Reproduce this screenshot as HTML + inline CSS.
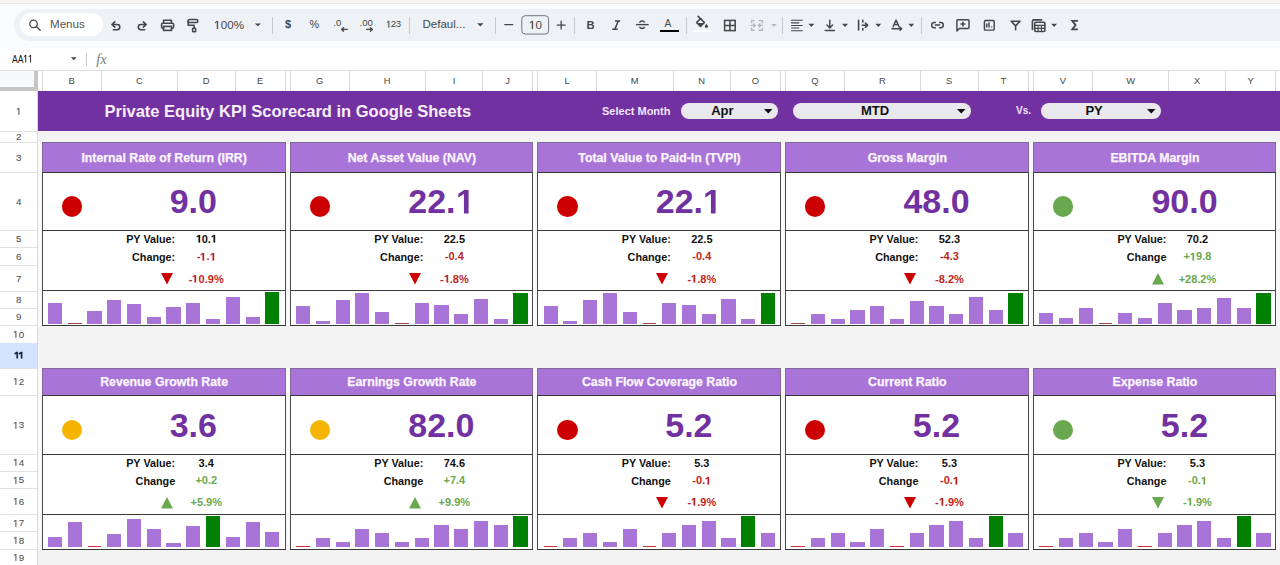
<!DOCTYPE html>
<html><head><meta charset="utf-8"><style>
*{box-sizing:border-box;margin:0;padding:0}
html,body{width:1280px;height:565px;overflow:hidden;background:#f9fbfd;font-family:"Liberation Sans",sans-serif}
body{position:relative}
.a{position:absolute}
.t{position:absolute;white-space:nowrap;line-height:1}
.c{position:absolute;white-space:nowrap;line-height:1;text-align:center}
.r{position:absolute;white-space:nowrap;line-height:1;text-align:right}
svg{position:absolute;overflow:visible}
svg.one{position:static;display:inline-block;vertical-align:baseline}
</style></head><body>
<div class="a" style="left:0px;top:0px;width:1280px;height:3.5px;background:#f6f5f2;"></div><div class="a" style="left:0px;top:3px;width:1280px;height:1px;background:#e9e7e4;"></div><div class="a" style="left:14px;top:9px;width:1300px;height:32px;background:#eef2f7;border-radius:16px;"></div><div class="a" style="left:20px;top:12.5px;width:83px;height:23.5px;background:#ffffff;border-radius:12px;"></div><div class="a" style="left:0px;top:47.5px;width:1280px;height:23px;background:#ffffff;"></div><div class="a" style="left:0px;top:70px;width:1280px;height:21px;background:#ffffff;"></div><div class="a" style="left:0px;top:70px;width:1280px;height:1px;background:#dcdcdc;"></div><svg style="left:0;top:0" width="1280" height="48"><circle cx="33.5" cy="23.9" r="3.7" fill="none" stroke="#444746" stroke-width="1.3" stroke-linecap="round" stroke-linejoin="round"/><path d="M36.3 26.6L40.2 30.2" fill="none" stroke="#444746" stroke-width="1.3" stroke-linecap="round" stroke-linejoin="round"/><path d="M114.8 21.8L111.9 24.5L114.8 27.2M112.3 24.5H117.2A2.6 2.6 0 0 1 117.2 29.7H113.4" fill="none" stroke="#444746" stroke-width="1.6" stroke-linecap="round" stroke-linejoin="round"/><path d="M143.3 21.8L146.2 24.5L143.3 27.2M145.8 24.5H140.9A2.6 2.6 0 0 0 140.9 29.7H144.7" fill="none" stroke="#444746" stroke-width="1.6" stroke-linecap="round" stroke-linejoin="round"/><path d="M163.6 23.2V20.3H171.4V23.2" fill="none" stroke="#444746" stroke-width="1.6" stroke-linecap="round" stroke-linejoin="round"/><rect x="161.6" y="23.2" width="12" height="5.2" rx="1.3" fill="none" stroke="#444746" stroke-width="1.6" stroke-linecap="round" stroke-linejoin="round"/><rect x="163.6" y="26.4" width="7.8" height="4" fill="#eef2f7" stroke="#444746" stroke-width="1.6"/><rect x="188.2" y="19.5" width="9.6" height="3" rx="1.3" fill="none" stroke="#444746" stroke-width="1.6" stroke-linecap="round" stroke-linejoin="round"/><path d="M188.2 21V25.2H194.1V28.2" fill="none" stroke="#444746" stroke-width="1.6" stroke-linecap="round" stroke-linejoin="round"/><rect x="192.6" y="28.2" width="3" height="3.6" rx="0.6" fill="none" stroke="#444746" stroke-width="1.6" stroke-linecap="round" stroke-linejoin="round"/><path d="M254.8 23.5H261L257.9 26.3Z" fill="#444746"/><path d="M477.2 23.3H483.4L480.29999999999995 26.4Z" fill="#444746"/><path d="M771.2 24H776.8L774.0 26.8Z" fill="#b5b8bb"/><path d="M808.4 23.8H814.3L811.3499999999999 26.9Z" fill="#444746"/><path d="M842 23.8H848.1L845.05 26.9Z" fill="#444746"/><path d="M875.5 23.8H881.2L878.35 26.9Z" fill="#444746"/><path d="M908.4 23.8H914.2L911.3 26.9Z" fill="#444746"/><path d="M1051.2 23.8H1057L1054.1 26.9Z" fill="#444746"/></svg><div class="a" style="left:272.2px;top:17px;width:1px;height:16.5px;background:#c7c7c7;"></div><div class="a" style="left:409px;top:17px;width:1px;height:16.5px;background:#c7c7c7;"></div><div class="a" style="left:495px;top:17px;width:1px;height:16.5px;background:#c7c7c7;"></div><div class="a" style="left:574.3px;top:17px;width:1px;height:16.5px;background:#c7c7c7;"></div><div class="a" style="left:686px;top:17px;width:1px;height:16.5px;background:#c7c7c7;"></div><div class="a" style="left:782.1px;top:17px;width:1px;height:16.5px;background:#c7c7c7;"></div><div class="a" style="left:921px;top:17px;width:1px;height:16.5px;background:#c7c7c7;"></div><div class="t" style="left:50px;top:17.97px;font-size:11.6px;color:#555555;font-weight:normal;">Menus</div><div class="t" style="left:214.3px;top:19.17px;font-size:11.6px;color:#444746;font-weight:normal;"><svg class="one" width="6.451" height="7.981" viewBox="0 0 1139 1409"><path transform="matrix(1 0 0 -1 0 1409)" d="M515 0V1237L197 1010V1180L530 1409H696V0Z" fill="currentColor" stroke="currentColor" stroke-width="40"/></svg>00%</div><div class="t" style="left:285px;top:18.86px;font-size:11px;color:#444746;font-weight:bold;">$</div><div class="t" style="left:309.5px;top:18.83px;font-size:10.8px;color:#444746;font-weight:normal;">%</div><div class="t" style="left:333.3px;top:17.93px;font-size:9.6px;color:#444746;font-weight:normal;">.0</div><div class="t" style="left:359.5px;top:17.93px;font-size:9.6px;color:#444746;font-weight:normal;">.00</div><div class="t" style="left:385.5px;top:19.33px;font-size:9.6px;color:#444746;font-weight:normal;letter-spacing:-0.4px;"><svg class="one" width="5.339" height="6.605" viewBox="0 0 1139 1409"><path transform="matrix(1 0 0 -1 0 1409)" d="M515 0V1237L197 1010V1180L530 1409H696V0Z" fill="currentColor" stroke="currentColor" stroke-width="40"/></svg>23</div><div class="t" style="left:422.5px;top:18.65px;font-size:11.5px;color:#444746;font-weight:normal;">Defaul...</div><div class="t" style="left:529px;top:18.77px;font-size:11.6px;color:#444746;font-weight:normal;"><svg class="one" width="6.451" height="7.981" viewBox="0 0 1139 1409"><path transform="matrix(1 0 0 -1 0 1409)" d="M515 0V1237L197 1010V1180L530 1409H696V0Z" fill="currentColor" stroke="currentColor" stroke-width="40"/></svg>0</div><svg style="left:0;top:0" width="1280" height="48"><path d="M341.5 29.4H347.2M343.6 27.6L341.5 29.4L343.6 31.2" fill="none" stroke="#444746" stroke-width="1.3" stroke-linecap="round" stroke-linejoin="round"/><path d="M366.6 29.4H372.4M370.3 27.6L372.4 29.4L370.3 31.2" fill="none" stroke="#444746" stroke-width="1.3" stroke-linecap="round" stroke-linejoin="round"/><path d="M504.8 24.6H512.8M557.2 25.1H565.2M561.2 21.1V29.1" fill="none" stroke="#444746" stroke-width="1.3" stroke-linecap="round" stroke-linejoin="round"/><rect x="521.8" y="15.7" width="26.8" height="18.4" rx="3.5" fill="none" stroke="#747775" stroke-width="1"/></svg><div class="t" style="left:586.5px;top:20.1px;font-size:11.2px;color:#444746;font-weight:bold;">B</div><div class="t" style="left:664.5px;top:18.53px;font-size:10.2px;color:#444746;font-weight:normal;">A</div><div class="a" style="left:660.3px;top:29.7px;width:18.3px;height:2.6px;background:#000000;"></div><div class="a" style="left:693px;top:30.2px;width:18.8px;height:2.2px;background:#ffffff;"></div><svg style="left:0;top:0" width="1280" height="48"><path d="M615 21H620.2M618.3 21L614.8 29.2M612.2 29.2H617.7" fill="none" stroke="#444746" stroke-width="1.6"/><path d="M635.9 24.6H648.7" stroke="#444746" stroke-width="1.4"/><path d="M639.6 22.6A2.6 2.2 0 0 1 644.6 22.4M639.6 26.8A2.6 2.4 0 0 0 644.6 26.8" fill="none" stroke="#444746" stroke-width="1.5"/><path d="M698.1 16.4L701 19.3" fill="none" stroke="#444746" stroke-width="1.6" stroke-linecap="round" stroke-linejoin="round"/><path d="M696.6 22.5L700.5 18.6L704.4 22.5L700.5 26.4Z" fill="none" stroke="#444746" stroke-width="1.6" stroke-linecap="round" stroke-linejoin="round"/><path d="M696.8 22.9H704.2L700.5 26.6Z" fill="#444746"/><path d="M706.4 23.8L707.8 25.8A1.5 1.5 0 1 1 705 25.8Z" fill="#444746"/><rect x="724.6" y="20.4" width="10.6" height="10.2" fill="none" stroke="#444746" stroke-width="1.5"/><path d="M729.9 20.4V30.6M724.6 25.5H735.2" stroke="#444746" stroke-width="1.5"/><path d="M754.6 20.6H751.6V23.3M751.6 27.8V30.3H754.6M758.7 20.6H762.4V23.3M762.4 27.8V30.3H758.7M750.6 25.4H755.2M753.4 23.6L755.2 25.4L753.4 27.2M763 25.4H758.4M760.2 23.6L758.4 25.4L760.2 27.2" fill="none" stroke="#b3b5b8" stroke-width="1.4"/><path d="M791.1 20.3H802.7M791.1 22.9H799.2M791.1 25.5H802.7M791.1 28H799.2M791.1 30.7H802.7" stroke="#444746" stroke-width="1.1"/><path d="M829.8 20.2V27.8M827 25.1L829.8 27.9L832.6 25.1M825.3 30.5H834.4" fill="none" stroke="#444746" stroke-width="1.45" stroke-linecap="round" stroke-linejoin="round"/><path d="M858.6 20.4V30M862.8 20.4V22M862.8 28.5V30M862.3 25.2H867.4M865.4 23.1L867.6 25.2L865.4 27.3" fill="none" stroke="#444746" stroke-width="1.6" stroke-linecap="round" stroke-linejoin="round"/><path d="M893.1 26.8L896.05 20.1L899 26.8M894.1 24.6H898M892 28.8H901.6M900 27.3L901.7 28.8L900 30.3" fill="none" stroke="#444746" stroke-width="1.45" stroke-linecap="round" stroke-linejoin="round"/><path d="M935.4 22.4H934.3A2.65 2.65 0 0 0 934.3 27.7H935.4M939.6 22.4H940.7A2.65 2.65 0 0 1 940.7 27.7H939.6M935.3 25.05H939.7" fill="none" stroke="#444746" stroke-width="1.45" stroke-linecap="round"/><path d="M956.9 31V20.6A1 1 0 0 1 957.9 19.7H968.1A1 1 0 0 1 969 20.6V27.6A1 1 0 0 1 968.1 28.5H959.3Z" fill="none" stroke="#444746" stroke-width="1.45" stroke-linejoin="round"/><path d="M962.9 21.7V26.5M960.5 24.1H965.3" fill="none" stroke="#444746" stroke-width="1.5"/><rect x="984.4" y="20.5" width="9.8" height="9.6" rx="1.2" fill="none" stroke="#444746" stroke-width="1.45"/><path d="M986.7 27.6V23.6M989 27.6V22.5M991.6 27.6V26.6" stroke="#444746" stroke-width="1.5"/><path d="M1011.2 21.2H1020L1015.6 25.9L1011.2 21.2M1015.6 25.6V29.7" fill="none" stroke="#444746" stroke-width="1.6" stroke-linejoin="round" stroke-linecap="round"/><path d="M1032.4 29.5V21.4A1.5 1.5 0 0 1 1033.9 19.9H1041.6" fill="none" stroke="#444746" stroke-width="1.6" stroke-linecap="round" stroke-linejoin="round"/><rect x="1034.7" y="22.3" width="10.2" height="9.2" rx="1.2" fill="none" stroke="#444746" stroke-width="1.6" stroke-linecap="round" stroke-linejoin="round"/><path d="M1034.7 25.4H1044.9M1034.7 28.4H1044.9M1038.1 25.4V31.5M1041.5 25.4V31.5" stroke="#444746" stroke-width="1.1"/><path d="M1077.9 20.9H1072.3L1075.6 25.1L1072.3 29.3H1077.9" fill="none" stroke="#444746" stroke-width="1.8" stroke-linejoin="miter"/></svg><div class="t" style="left:11.6px;top:53.53px;font-size:10.8px;color:#1a1a1a;font-weight:normal;transform:scaleX(0.8);transform-origin:0 0;">AA<svg class="one" width="6.006" height="7.430" viewBox="0 0 1139 1409"><path transform="matrix(1 0 0 -1 0 1409)" d="M515 0V1237L197 1010V1180L530 1409H696V0Z" fill="currentColor" stroke="currentColor" stroke-width="40"/></svg><svg class="one" width="6.006" height="7.430" viewBox="0 0 1139 1409"><path transform="matrix(1 0 0 -1 0 1409)" d="M515 0V1237L197 1010V1180L530 1409H696V0Z" fill="currentColor" stroke="currentColor" stroke-width="40"/></svg></div><svg style="left:0;top:0" width="200" height="70"><path d="M70.9 57.3H76.6L73.75 60.3Z" fill="#444746"/></svg><div class="a" style="left:86.3px;top:52.7px;width:1px;height:13.6px;background:#c7c7c7;"></div><div class="t" style="left:96.3px;top:51.96px;font-size:14.5px;color:#7d7d7d;font-weight:normal;font-family:'Liberation Serif',serif;"><i>fx</i></div><div class="a" style="left:38px;top:91px;width:1242px;height:474px;background:#f3f3f3;"></div><div class="a" style="left:0px;top:91px;width:37.5px;height:474px;background:#ffffff;"></div><div class="a" style="left:0px;top:71px;width:34px;height:16.3px;background:#f8f9fa;"></div><div class="a" style="left:34px;top:71px;width:4px;height:20px;background:#c6c6c6;"></div><div class="a" style="left:0px;top:87.3px;width:38px;height:3.4px;background:#c6c6c6;"></div><div class="a" style="left:37px;top:91px;width:1px;height:474px;background:#d9d9d9;"></div><div class="a" style="left:0px;top:130.5px;width:37px;height:1px;background:#e2e2e2;"></div><div class="c" style="left:0.3px;top:106.31px;width:37px;font-size:9.8px;color:#555555;font-weight:normal;-webkit-text-stroke:0.1px #555555;"><svg class="one" width="5.450" height="6.742" viewBox="0 0 1139 1409"><path transform="matrix(1 0 0 -1 0 1409)" d="M515 0V1237L197 1010V1180L530 1409H696V0Z" fill="currentColor" stroke="currentColor" stroke-width="40"/></svg></div><div class="a" style="left:0px;top:142px;width:37px;height:1px;background:#e2e2e2;"></div><div class="c" style="left:0.3px;top:132.06px;width:37px;font-size:9.8px;color:#555555;font-weight:normal;-webkit-text-stroke:0.1px #555555;">2</div><div class="a" style="left:0px;top:171.7px;width:37px;height:1px;background:#e2e2e2;"></div><div class="c" style="left:0.3px;top:152.66px;width:37px;font-size:9.8px;color:#555555;font-weight:normal;-webkit-text-stroke:0.1px #555555;">3</div><div class="a" style="left:0px;top:229.8px;width:37px;height:1px;background:#e2e2e2;"></div><div class="c" style="left:0.3px;top:196.56px;width:37px;font-size:9.8px;color:#555555;font-weight:normal;-webkit-text-stroke:0.1px #555555;">4</div><div class="a" style="left:0px;top:247.3px;width:37px;height:1px;background:#e2e2e2;"></div><div class="c" style="left:0.3px;top:234.36px;width:37px;font-size:9.8px;color:#555555;font-weight:normal;-webkit-text-stroke:0.1px #555555;">5</div><div class="a" style="left:0px;top:264.9px;width:37px;height:1px;background:#e2e2e2;"></div><div class="c" style="left:0.3px;top:251.91px;width:37px;font-size:9.8px;color:#555555;font-weight:normal;-webkit-text-stroke:0.1px #555555;">6</div><div class="a" style="left:0px;top:290.5px;width:37px;height:1px;background:#e2e2e2;"></div><div class="c" style="left:0.3px;top:273.51px;width:37px;font-size:9.8px;color:#555555;font-weight:normal;-webkit-text-stroke:0.1px #555555;">7</div><div class="a" style="left:0px;top:307.9px;width:37px;height:1px;background:#e2e2e2;"></div><div class="c" style="left:0.3px;top:295.01px;width:37px;font-size:9.8px;color:#555555;font-weight:normal;-webkit-text-stroke:0.1px #555555;">8</div><div class="a" style="left:0px;top:324.9px;width:37px;height:1px;background:#e2e2e2;"></div><div class="c" style="left:0.3px;top:312.21px;width:37px;font-size:9.8px;color:#555555;font-weight:normal;-webkit-text-stroke:0.1px #555555;">9</div><div class="a" style="left:0px;top:342.5px;width:37px;height:1px;background:#e2e2e2;"></div><div class="c" style="left:0.3px;top:329.51px;width:37px;font-size:9.8px;color:#555555;font-weight:normal;-webkit-text-stroke:0.1px #555555;"><svg class="one" width="5.450" height="6.742" viewBox="0 0 1139 1409"><path transform="matrix(1 0 0 -1 0 1409)" d="M515 0V1237L197 1010V1180L530 1409H696V0Z" fill="currentColor" stroke="currentColor" stroke-width="40"/></svg>0</div><div class="a" style="left:0px;top:343px;width:37px;height:25.3px;background:#d3e3fd;"></div><div class="a" style="left:0px;top:367.8px;width:37px;height:1px;background:#e2e2e2;"></div><svg style="left:0;top:0" width="40" height="400"><path d="M14.6 354L16.6 352.6H17.2V358.6M19 354L21 352.6H21.6V358.6" fill="none" stroke="#1a2744" stroke-width="1.7" stroke-linejoin="miter"/></svg><div class="a" style="left:0px;top:395px;width:37px;height:1px;background:#e2e2e2;"></div><div class="c" style="left:0.3px;top:377.21px;width:37px;font-size:9.8px;color:#555555;font-weight:normal;-webkit-text-stroke:0.1px #555555;"><svg class="one" width="5.450" height="6.742" viewBox="0 0 1139 1409"><path transform="matrix(1 0 0 -1 0 1409)" d="M515 0V1237L197 1010V1180L530 1409H696V0Z" fill="currentColor" stroke="currentColor" stroke-width="40"/></svg>2</div><div class="a" style="left:0px;top:453.9px;width:37px;height:1px;background:#e2e2e2;"></div><div class="c" style="left:0.3px;top:420.26px;width:37px;font-size:9.8px;color:#555555;font-weight:normal;-webkit-text-stroke:0.1px #555555;"><svg class="one" width="5.450" height="6.742" viewBox="0 0 1139 1409"><path transform="matrix(1 0 0 -1 0 1409)" d="M515 0V1237L197 1010V1180L530 1409H696V0Z" fill="currentColor" stroke="currentColor" stroke-width="40"/></svg>3</div><div class="a" style="left:0px;top:470.9px;width:37px;height:1px;background:#e2e2e2;"></div><div class="c" style="left:0.3px;top:458.21px;width:37px;font-size:9.8px;color:#555555;font-weight:normal;-webkit-text-stroke:0.1px #555555;"><svg class="one" width="5.450" height="6.742" viewBox="0 0 1139 1409"><path transform="matrix(1 0 0 -1 0 1409)" d="M515 0V1237L197 1010V1180L530 1409H696V0Z" fill="currentColor" stroke="currentColor" stroke-width="40"/></svg>4</div><div class="a" style="left:0px;top:488.2px;width:37px;height:1px;background:#e2e2e2;"></div><div class="c" style="left:0.3px;top:475.36px;width:37px;font-size:9.8px;color:#555555;font-weight:normal;-webkit-text-stroke:0.1px #555555;"><svg class="one" width="5.450" height="6.742" viewBox="0 0 1139 1409"><path transform="matrix(1 0 0 -1 0 1409)" d="M515 0V1237L197 1010V1180L530 1409H696V0Z" fill="currentColor" stroke="currentColor" stroke-width="40"/></svg>5</div><div class="a" style="left:0px;top:514.1px;width:37px;height:1px;background:#e2e2e2;"></div><div class="c" style="left:0.3px;top:496.96px;width:37px;font-size:9.8px;color:#555555;font-weight:normal;-webkit-text-stroke:0.1px #555555;"><svg class="one" width="5.450" height="6.742" viewBox="0 0 1139 1409"><path transform="matrix(1 0 0 -1 0 1409)" d="M515 0V1237L197 1010V1180L530 1409H696V0Z" fill="currentColor" stroke="currentColor" stroke-width="40"/></svg>6</div><div class="a" style="left:0px;top:530.9px;width:37px;height:1px;background:#e2e2e2;"></div><div class="c" style="left:0.3px;top:518.31px;width:37px;font-size:9.8px;color:#555555;font-weight:normal;-webkit-text-stroke:0.1px #555555;"><svg class="one" width="5.450" height="6.742" viewBox="0 0 1139 1409"><path transform="matrix(1 0 0 -1 0 1409)" d="M515 0V1237L197 1010V1180L530 1409H696V0Z" fill="currentColor" stroke="currentColor" stroke-width="40"/></svg>7</div><div class="a" style="left:0px;top:548.6px;width:37px;height:1px;background:#e2e2e2;"></div><div class="c" style="left:0.3px;top:535.56px;width:37px;font-size:9.8px;color:#555555;font-weight:normal;-webkit-text-stroke:0.1px #555555;"><svg class="one" width="5.450" height="6.742" viewBox="0 0 1139 1409"><path transform="matrix(1 0 0 -1 0 1409)" d="M515 0V1237L197 1010V1180L530 1409H696V0Z" fill="currentColor" stroke="currentColor" stroke-width="40"/></svg>8</div><div class="a" style="left:0px;top:565.5px;width:37px;height:1px;background:#e2e2e2;"></div><div class="c" style="left:0.3px;top:552.86px;width:37px;font-size:9.8px;color:#555555;font-weight:normal;-webkit-text-stroke:0.1px #555555;"><svg class="one" width="5.450" height="6.742" viewBox="0 0 1139 1409"><path transform="matrix(1 0 0 -1 0 1409)" d="M515 0V1237L197 1010V1180L530 1409H696V0Z" fill="currentColor" stroke="currentColor" stroke-width="40"/></svg>9</div><div class="a" style="left:41.7px;top:71px;width:1px;height:19.5px;background:#d9d9d9;"></div><div class="c" style="left:42.2px;top:76.09px;width:59px;font-size:9.4px;color:#474747;font-weight:normal;">B</div><div class="a" style="left:100.7px;top:71px;width:1px;height:19.5px;background:#d9d9d9;"></div><div class="c" style="left:101.2px;top:76.09px;width:76.3px;font-size:9.4px;color:#474747;font-weight:normal;">C</div><div class="a" style="left:177px;top:71px;width:1px;height:19.5px;background:#d9d9d9;"></div><div class="c" style="left:177.5px;top:76.09px;width:57.5px;font-size:9.4px;color:#474747;font-weight:normal;">D</div><div class="a" style="left:234.5px;top:71px;width:1px;height:19.5px;background:#d9d9d9;"></div><div class="a" style="left:284.75px;top:71px;width:1px;height:19.5px;background:#d9d9d9;"></div><div class="c" style="left:235px;top:76.09px;width:50.25px;font-size:9.4px;color:#474747;font-weight:normal;">E</div><div class="a" style="left:289.75px;top:71px;width:1px;height:19.5px;background:#d9d9d9;"></div><div class="c" style="left:290.25px;top:76.09px;width:58.75px;font-size:9.4px;color:#474747;font-weight:normal;">G</div><div class="a" style="left:348.5px;top:71px;width:1px;height:19.5px;background:#d9d9d9;"></div><div class="c" style="left:349px;top:76.09px;width:76.5px;font-size:9.4px;color:#474747;font-weight:normal;">H</div><div class="a" style="left:425px;top:71px;width:1px;height:19.5px;background:#d9d9d9;"></div><div class="c" style="left:425.5px;top:76.09px;width:57px;font-size:9.4px;color:#474747;font-weight:normal;">I</div><div class="a" style="left:482px;top:71px;width:1px;height:19.5px;background:#d9d9d9;"></div><div class="a" style="left:532px;top:71px;width:1px;height:19.5px;background:#d9d9d9;"></div><div class="c" style="left:482.5px;top:76.09px;width:50px;font-size:9.4px;color:#474747;font-weight:normal;">J</div><div class="a" style="left:537px;top:71px;width:1px;height:19.5px;background:#d9d9d9;"></div><div class="c" style="left:537.5px;top:76.09px;width:59px;font-size:9.4px;color:#474747;font-weight:normal;">L</div><div class="a" style="left:596px;top:71px;width:1px;height:19.5px;background:#d9d9d9;"></div><div class="c" style="left:596.5px;top:76.09px;width:76.5px;font-size:9.4px;color:#474747;font-weight:normal;">M</div><div class="a" style="left:672.5px;top:71px;width:1px;height:19.5px;background:#d9d9d9;"></div><div class="c" style="left:673px;top:76.09px;width:57.5px;font-size:9.4px;color:#474747;font-weight:normal;">N</div><div class="a" style="left:730px;top:71px;width:1px;height:19.5px;background:#d9d9d9;"></div><div class="a" style="left:780px;top:71px;width:1px;height:19.5px;background:#d9d9d9;"></div><div class="c" style="left:730.5px;top:76.09px;width:50px;font-size:9.4px;color:#474747;font-weight:normal;">O</div><div class="a" style="left:785px;top:71px;width:1px;height:19.5px;background:#d9d9d9;"></div><div class="c" style="left:785.5px;top:76.09px;width:59px;font-size:9.4px;color:#474747;font-weight:normal;">Q</div><div class="a" style="left:844px;top:71px;width:1px;height:19.5px;background:#d9d9d9;"></div><div class="c" style="left:844.5px;top:76.09px;width:76px;font-size:9.4px;color:#474747;font-weight:normal;">R</div><div class="a" style="left:920px;top:71px;width:1px;height:19.5px;background:#d9d9d9;"></div><div class="c" style="left:920.5px;top:76.09px;width:57.5px;font-size:9.4px;color:#474747;font-weight:normal;">S</div><div class="a" style="left:977.5px;top:71px;width:1px;height:19.5px;background:#d9d9d9;"></div><div class="a" style="left:1028.25px;top:71px;width:1px;height:19.5px;background:#d9d9d9;"></div><div class="c" style="left:978px;top:76.09px;width:50.75px;font-size:9.4px;color:#474747;font-weight:normal;">T</div><div class="a" style="left:1033px;top:71px;width:1px;height:19.5px;background:#d9d9d9;"></div><div class="c" style="left:1033.5px;top:76.09px;width:59px;font-size:9.4px;color:#474747;font-weight:normal;">V</div><div class="a" style="left:1092px;top:71px;width:1px;height:19.5px;background:#d9d9d9;"></div><div class="c" style="left:1092.5px;top:76.09px;width:76.25px;font-size:9.4px;color:#474747;font-weight:normal;">W</div><div class="a" style="left:1168.25px;top:71px;width:1px;height:19.5px;background:#d9d9d9;"></div><div class="c" style="left:1168.75px;top:76.09px;width:56.85px;font-size:9.4px;color:#474747;font-weight:normal;">X</div><div class="a" style="left:1225.1px;top:71px;width:1px;height:19.5px;background:#d9d9d9;"></div><div class="c" style="left:1225.6px;top:76.09px;width:50px;font-size:9.4px;color:#474747;font-weight:normal;">Y</div><div class="a" style="left:1275.1px;top:71px;width:1px;height:19.5px;background:#d9d9d9;"></div><div class="a" style="left:38px;top:91px;width:1242px;height:40px;background:#7131a1;"></div><div class="t" style="left:104.5px;top:103.2px;font-size:16.5px;color:#f8eefc;font-weight:bold;">Private Equity KPI Scorecard in Google Sheets</div><div class="t" style="left:602px;top:105.56px;font-size:11px;color:#f3e6fb;font-weight:bold;">Select Month</div><div class="a" style="left:680.6px;top:103px;width:97.7px;height:15.6px;background:#e9e8ec;border-radius:8px;"></div><div class="c" style="left:680.6px;top:104.1px;width:83.7px;font-size:13px;color:#111;font-weight:bold;">Apr</div><svg style="left:764.3px;top:109px" width="9" height="5"><path d="M0 0H8.5L4.25 4.5Z" fill="#111"/></svg><div class="a" style="left:793.1px;top:103px;width:177.8px;height:15.6px;background:#e9e8ec;border-radius:8px;"></div><div class="c" style="left:793.1px;top:104.1px;width:163.8px;font-size:13px;color:#111;font-weight:bold;">MTD</div><svg style="left:956.9px;top:109px" width="9" height="5"><path d="M0 0H8.5L4.25 4.5Z" fill="#111"/></svg><div class="t" style="left:1016px;top:106.4px;font-size:10px;color:#f3e6fb;font-weight:bold;">Vs.</div><div class="a" style="left:1040.9px;top:103px;width:120.4px;height:15.6px;background:#e9e8ec;border-radius:8px;"></div><div class="c" style="left:1040.9px;top:104.1px;width:106.4px;font-size:13px;color:#111;font-weight:bold;">PY</div><svg style="left:1147.3px;top:109px" width="9" height="5"><path d="M0 0H8.5L4.25 4.5Z" fill="#111"/></svg><div class="a" style="left:38px;top:142px;width:1242px;height:183.8px;background:#f9f9f9;"></div><div class="a" style="left:38px;top:368px;width:1242px;height:181.3px;background:#f9f9f9;"></div><div class="a" style="left:41.8px;top:142px;width:244px;height:183.8px;background:#ffffff;"></div><div class="a" style="left:41.8px;top:142px;width:244px;height:30.7px;background:#a974d8;"></div><div class="a" style="left:41.8px;top:142px;width:244px;height:1px;background:#86689a;"></div><div class="a" style="left:41.8px;top:142px;width:1px;height:29.7px;background:#86689a;"></div><div class="a" style="left:284.8px;top:142px;width:1px;height:29.7px;background:#86689a;"></div><div class="a" style="left:41.8px;top:171.7px;width:244px;height:1px;background:#383838;"></div><div class="a" style="left:41.8px;top:229.8px;width:244px;height:1px;background:#383838;"></div><div class="a" style="left:41.8px;top:290px;width:244px;height:1px;background:#383838;"></div><div class="a" style="left:41.8px;top:324.8px;width:244px;height:1px;background:#383838;"></div><div class="a" style="left:41.8px;top:172.2px;width:1px;height:153.1px;background:#4a4a4a;"></div><div class="a" style="left:284.8px;top:172.2px;width:1px;height:153.1px;background:#4a4a4a;"></div><div class="c" style="left:42.6px;top:151.78px;width:243px;font-size:12.3px;color:#fbf6ff;font-weight:bold;-webkit-text-stroke:0.25px #fbf6ff;">Internal Rate of Return (IRR)</div><div class="a" style="left:61.55px;top:196px;width:20.5px;height:20.5px;border-radius:50%;background:#cc0000"></div><div class="c" style="left:101.3px;top:183.96px;width:184px;font-size:34px;color:#7131a1;font-weight:bold;">9.0</div><div class="r" style="left:42.3px;top:234.23px;width:132.9px;font-size:10.8px;color:#111;font-weight:bold;">PY Value:</div><div class="r" style="left:42.3px;top:251.53px;width:132.9px;font-size:10.8px;color:#111;font-weight:bold;">Change:</div><div class="c" style="left:177.6px;top:234.06px;width:57.3px;font-size:11px;color:#111;font-weight:bold;"><svg class="one" width="6.118" height="7.568" viewBox="0 0 1139 1409"><path transform="matrix(1 0 0 -1 0 1409)" d="M478 0V1170L140 959V1180L493 1409H759V0Z" fill="currentColor" stroke="currentColor" stroke-width="40"/></svg>0.<svg class="one" width="6.118" height="7.568" viewBox="0 0 1139 1409"><path transform="matrix(1 0 0 -1 0 1409)" d="M478 0V1170L140 959V1180L493 1409H759V0Z" fill="currentColor" stroke="currentColor" stroke-width="40"/></svg></div><div class="c" style="left:177.6px;top:251.36px;width:57.3px;font-size:11px;color:#c31f22;font-weight:bold;">-<svg class="one" width="6.118" height="7.568" viewBox="0 0 1139 1409"><path transform="matrix(1 0 0 -1 0 1409)" d="M478 0V1170L140 959V1180L493 1409H759V0Z" fill="currentColor" stroke="currentColor" stroke-width="40"/></svg>.<svg class="one" width="6.118" height="7.568" viewBox="0 0 1139 1409"><path transform="matrix(1 0 0 -1 0 1409)" d="M478 0V1170L140 959V1180L493 1409H759V0Z" fill="currentColor" stroke="currentColor" stroke-width="40"/></svg></div><div class="c" style="left:177.6px;top:273.56px;width:57.3px;font-size:11px;color:#c31f22;font-weight:bold;">-<svg class="one" width="6.118" height="7.568" viewBox="0 0 1139 1409"><path transform="matrix(1 0 0 -1 0 1409)" d="M478 0V1170L140 959V1180L493 1409H759V0Z" fill="currentColor" stroke="currentColor" stroke-width="40"/></svg>0.9%</div><svg style="left:160.8px;top:272.9px" width="12" height="11.5"><path d="M0 0H12L6 11.5Z" fill="#cc0000"/></svg><div class="a" style="left:47.9px;top:302.7px;width:14.2px;height:20.9px;background:#a974d8;"></div><div class="a" style="left:67.96px;top:322.9px;width:13.6px;height:1px;background:#9c4545;"></div><div class="a" style="left:87.42px;top:311.49px;width:14.2px;height:12.11px;background:#a974d8;"></div><div class="a" style="left:107.18px;top:299.77px;width:14.2px;height:23.83px;background:#a974d8;"></div><div class="a" style="left:126.94px;top:304.07px;width:14.2px;height:19.53px;background:#a974d8;"></div><div class="a" style="left:146.7px;top:316.76px;width:14.2px;height:6.84px;background:#a974d8;"></div><div class="a" style="left:166.46px;top:307px;width:14.2px;height:16.6px;background:#a974d8;"></div><div class="a" style="left:186.22px;top:303.48px;width:14.2px;height:20.12px;background:#a974d8;"></div><div class="a" style="left:205.98px;top:318.72px;width:14.2px;height:4.88px;background:#a974d8;"></div><div class="a" style="left:225.74px;top:296.84px;width:14.2px;height:26.76px;background:#a974d8;"></div><div class="a" style="left:245.5px;top:317.15px;width:14.2px;height:6.45px;background:#a974d8;"></div><div class="a" style="left:265.26px;top:292.35px;width:14.2px;height:31.25px;background:#008000;"></div><div class="a" style="left:289.9px;top:142px;width:243.4px;height:183.8px;background:#ffffff;"></div><div class="a" style="left:289.9px;top:142px;width:243.4px;height:30.7px;background:#a974d8;"></div><div class="a" style="left:289.9px;top:142px;width:243.4px;height:1px;background:#86689a;"></div><div class="a" style="left:289.9px;top:142px;width:1px;height:29.7px;background:#86689a;"></div><div class="a" style="left:532.3px;top:142px;width:1px;height:29.7px;background:#86689a;"></div><div class="a" style="left:289.9px;top:171.7px;width:243.4px;height:1px;background:#383838;"></div><div class="a" style="left:289.9px;top:229.8px;width:243.4px;height:1px;background:#383838;"></div><div class="a" style="left:289.9px;top:290px;width:243.4px;height:1px;background:#383838;"></div><div class="a" style="left:289.9px;top:324.8px;width:243.4px;height:1px;background:#383838;"></div><div class="a" style="left:289.9px;top:172.2px;width:1px;height:153.1px;background:#4a4a4a;"></div><div class="a" style="left:532.3px;top:172.2px;width:1px;height:153.1px;background:#4a4a4a;"></div><div class="c" style="left:290.7px;top:151.78px;width:242.4px;font-size:12.3px;color:#fbf6ff;font-weight:bold;-webkit-text-stroke:0.25px #fbf6ff;">Net Asset Value (NAV)</div><div class="a" style="left:309.65px;top:196px;width:20.5px;height:20.5px;border-radius:50%;background:#cc0000"></div><div class="c" style="left:349.4px;top:183.96px;width:184px;font-size:34px;color:#7131a1;font-weight:bold;">22.<svg class="one" width="18.909" height="23.392" viewBox="0 0 1139 1409"><path transform="matrix(1 0 0 -1 0 1409)" d="M478 0V1170L140 959V1180L493 1409H759V0Z" fill="currentColor" stroke="currentColor" stroke-width="0"/></svg></div><div class="r" style="left:290.4px;top:234.23px;width:132.9px;font-size:10.8px;color:#111;font-weight:bold;">PY Value:</div><div class="r" style="left:290.4px;top:251.53px;width:132.9px;font-size:10.8px;color:#111;font-weight:bold;">Change:</div><div class="c" style="left:425.7px;top:234.06px;width:57.3px;font-size:11px;color:#111;font-weight:bold;">22.5</div><div class="c" style="left:425.7px;top:251.36px;width:57.3px;font-size:11px;color:#c31f22;font-weight:bold;">-0.4</div><div class="c" style="left:425.7px;top:273.56px;width:57.3px;font-size:11px;color:#c31f22;font-weight:bold;">-<svg class="one" width="6.118" height="7.568" viewBox="0 0 1139 1409"><path transform="matrix(1 0 0 -1 0 1409)" d="M478 0V1170L140 959V1180L493 1409H759V0Z" fill="currentColor" stroke="currentColor" stroke-width="40"/></svg>.8%</div><svg style="left:408.9px;top:272.9px" width="12" height="11.5"><path d="M0 0H12L6 11.5Z" fill="#cc0000"/></svg><div class="a" style="left:296px;top:306.41px;width:14.2px;height:17.19px;background:#a974d8;"></div><div class="a" style="left:315.76px;top:320.87px;width:14.2px;height:2.73px;background:#a974d8;"></div><div class="a" style="left:335.52px;top:299.77px;width:14.2px;height:23.83px;background:#a974d8;"></div><div class="a" style="left:355.28px;top:293.33px;width:14.2px;height:30.27px;background:#a974d8;"></div><div class="a" style="left:375.04px;top:311.88px;width:14.2px;height:11.72px;background:#a974d8;"></div><div class="a" style="left:395.1px;top:322.9px;width:13.6px;height:1px;background:#9c4545;"></div><div class="a" style="left:414.56px;top:302.7px;width:14.2px;height:20.9px;background:#a974d8;"></div><div class="a" style="left:434.32px;top:304.85px;width:14.2px;height:18.75px;background:#a974d8;"></div><div class="a" style="left:454.08px;top:313.64px;width:14.2px;height:9.96px;background:#a974d8;"></div><div class="a" style="left:473.84px;top:298.6px;width:14.2px;height:25px;background:#a974d8;"></div><div class="a" style="left:493.6px;top:319.3px;width:14.2px;height:4.3px;background:#a974d8;"></div><div class="a" style="left:513.36px;top:292.74px;width:14.2px;height:30.86px;background:#008000;"></div><div class="a" style="left:537.4px;top:142px;width:243.6px;height:183.8px;background:#ffffff;"></div><div class="a" style="left:537.4px;top:142px;width:243.6px;height:30.7px;background:#a974d8;"></div><div class="a" style="left:537.4px;top:142px;width:243.6px;height:1px;background:#86689a;"></div><div class="a" style="left:537.4px;top:142px;width:1px;height:29.7px;background:#86689a;"></div><div class="a" style="left:780px;top:142px;width:1px;height:29.7px;background:#86689a;"></div><div class="a" style="left:537.4px;top:171.7px;width:243.6px;height:1px;background:#383838;"></div><div class="a" style="left:537.4px;top:229.8px;width:243.6px;height:1px;background:#383838;"></div><div class="a" style="left:537.4px;top:290px;width:243.6px;height:1px;background:#383838;"></div><div class="a" style="left:537.4px;top:324.8px;width:243.6px;height:1px;background:#383838;"></div><div class="a" style="left:537.4px;top:172.2px;width:1px;height:153.1px;background:#4a4a4a;"></div><div class="a" style="left:780px;top:172.2px;width:1px;height:153.1px;background:#4a4a4a;"></div><div class="c" style="left:538.2px;top:151.78px;width:242.6px;font-size:12.3px;color:#fbf6ff;font-weight:bold;-webkit-text-stroke:0.25px #fbf6ff;">Total Value to Paid-In (TVPI)</div><div class="a" style="left:557.15px;top:196px;width:20.5px;height:20.5px;border-radius:50%;background:#cc0000"></div><div class="c" style="left:596.9px;top:183.96px;width:184px;font-size:34px;color:#7131a1;font-weight:bold;">22.<svg class="one" width="18.909" height="23.392" viewBox="0 0 1139 1409"><path transform="matrix(1 0 0 -1 0 1409)" d="M478 0V1170L140 959V1180L493 1409H759V0Z" fill="currentColor" stroke="currentColor" stroke-width="0"/></svg></div><div class="r" style="left:537.9px;top:234.23px;width:132.9px;font-size:10.8px;color:#111;font-weight:bold;">PY Value:</div><div class="r" style="left:537.9px;top:251.53px;width:132.9px;font-size:10.8px;color:#111;font-weight:bold;">Change:</div><div class="c" style="left:673.2px;top:234.06px;width:57.3px;font-size:11px;color:#111;font-weight:bold;">22.5</div><div class="c" style="left:673.2px;top:251.36px;width:57.3px;font-size:11px;color:#c31f22;font-weight:bold;">-0.4</div><div class="c" style="left:673.2px;top:273.56px;width:57.3px;font-size:11px;color:#c31f22;font-weight:bold;">-<svg class="one" width="6.118" height="7.568" viewBox="0 0 1139 1409"><path transform="matrix(1 0 0 -1 0 1409)" d="M478 0V1170L140 959V1180L493 1409H759V0Z" fill="currentColor" stroke="currentColor" stroke-width="40"/></svg>.8%</div><svg style="left:656.4px;top:272.9px" width="12" height="11.5"><path d="M0 0H12L6 11.5Z" fill="#cc0000"/></svg><div class="a" style="left:543.5px;top:306.41px;width:14.2px;height:17.19px;background:#a974d8;"></div><div class="a" style="left:563.26px;top:320.87px;width:14.2px;height:2.73px;background:#a974d8;"></div><div class="a" style="left:583.02px;top:299.77px;width:14.2px;height:23.83px;background:#a974d8;"></div><div class="a" style="left:602.78px;top:293.33px;width:14.2px;height:30.27px;background:#a974d8;"></div><div class="a" style="left:622.54px;top:311.88px;width:14.2px;height:11.72px;background:#a974d8;"></div><div class="a" style="left:642.6px;top:322.9px;width:13.6px;height:1px;background:#9c4545;"></div><div class="a" style="left:662.06px;top:302.7px;width:14.2px;height:20.9px;background:#a974d8;"></div><div class="a" style="left:681.82px;top:304.85px;width:14.2px;height:18.75px;background:#a974d8;"></div><div class="a" style="left:701.58px;top:313.64px;width:14.2px;height:9.96px;background:#a974d8;"></div><div class="a" style="left:721.34px;top:298.6px;width:14.2px;height:25px;background:#a974d8;"></div><div class="a" style="left:741.1px;top:319.3px;width:14.2px;height:4.3px;background:#a974d8;"></div><div class="a" style="left:760.86px;top:292.74px;width:14.2px;height:30.86px;background:#008000;"></div><div class="a" style="left:785px;top:142px;width:244px;height:183.8px;background:#ffffff;"></div><div class="a" style="left:785px;top:142px;width:244px;height:30.7px;background:#a974d8;"></div><div class="a" style="left:785px;top:142px;width:244px;height:1px;background:#86689a;"></div><div class="a" style="left:785px;top:142px;width:1px;height:29.7px;background:#86689a;"></div><div class="a" style="left:1028px;top:142px;width:1px;height:29.7px;background:#86689a;"></div><div class="a" style="left:785px;top:171.7px;width:244px;height:1px;background:#383838;"></div><div class="a" style="left:785px;top:229.8px;width:244px;height:1px;background:#383838;"></div><div class="a" style="left:785px;top:290px;width:244px;height:1px;background:#383838;"></div><div class="a" style="left:785px;top:324.8px;width:244px;height:1px;background:#383838;"></div><div class="a" style="left:785px;top:172.2px;width:1px;height:153.1px;background:#4a4a4a;"></div><div class="a" style="left:1028px;top:172.2px;width:1px;height:153.1px;background:#4a4a4a;"></div><div class="c" style="left:785.8px;top:151.78px;width:243px;font-size:12.3px;color:#fbf6ff;font-weight:bold;-webkit-text-stroke:0.25px #fbf6ff;">Gross Margin</div><div class="a" style="left:804.75px;top:196px;width:20.5px;height:20.5px;border-radius:50%;background:#cc0000"></div><div class="c" style="left:844.5px;top:183.96px;width:184px;font-size:34px;color:#7131a1;font-weight:bold;">48.0</div><div class="r" style="left:785.5px;top:234.23px;width:132.9px;font-size:10.8px;color:#111;font-weight:bold;">PY Value:</div><div class="r" style="left:785.5px;top:251.53px;width:132.9px;font-size:10.8px;color:#111;font-weight:bold;">Change:</div><div class="c" style="left:920.8px;top:234.06px;width:57.3px;font-size:11px;color:#111;font-weight:bold;">52.3</div><div class="c" style="left:920.8px;top:251.36px;width:57.3px;font-size:11px;color:#c31f22;font-weight:bold;">-4.3</div><div class="c" style="left:920.8px;top:273.56px;width:57.3px;font-size:11px;color:#c31f22;font-weight:bold;">-8.2%</div><svg style="left:904px;top:272.9px" width="12" height="11.5"><path d="M0 0H12L6 11.5Z" fill="#cc0000"/></svg><div class="a" style="left:791.4px;top:322.9px;width:13.6px;height:1px;background:#9c4545;"></div><div class="a" style="left:810.86px;top:314.23px;width:14.2px;height:9.38px;background:#a974d8;"></div><div class="a" style="left:830.62px;top:318.72px;width:14.2px;height:4.88px;background:#a974d8;"></div><div class="a" style="left:850.38px;top:309.93px;width:14.2px;height:13.67px;background:#a974d8;"></div><div class="a" style="left:870.14px;top:305.63px;width:14.2px;height:17.97px;background:#a974d8;"></div><div class="a" style="left:889.9px;top:318.72px;width:14.2px;height:4.88px;background:#a974d8;"></div><div class="a" style="left:909.66px;top:301.14px;width:14.2px;height:22.46px;background:#a974d8;"></div><div class="a" style="left:929.42px;top:305.63px;width:14.2px;height:17.97px;background:#a974d8;"></div><div class="a" style="left:949.18px;top:314.23px;width:14.2px;height:9.38px;background:#a974d8;"></div><div class="a" style="left:968.94px;top:296.84px;width:14.2px;height:26.76px;background:#a974d8;"></div><div class="a" style="left:988.7px;top:309.93px;width:14.2px;height:13.67px;background:#a974d8;"></div><div class="a" style="left:1008.46px;top:292.74px;width:14.2px;height:30.86px;background:#008000;"></div><div class="a" style="left:1033px;top:142px;width:243.3px;height:183.8px;background:#ffffff;"></div><div class="a" style="left:1033px;top:142px;width:243.3px;height:30.7px;background:#a974d8;"></div><div class="a" style="left:1033px;top:142px;width:243.3px;height:1px;background:#86689a;"></div><div class="a" style="left:1033px;top:142px;width:1px;height:29.7px;background:#86689a;"></div><div class="a" style="left:1275.3px;top:142px;width:1px;height:29.7px;background:#86689a;"></div><div class="a" style="left:1033px;top:171.7px;width:243.3px;height:1px;background:#383838;"></div><div class="a" style="left:1033px;top:229.8px;width:243.3px;height:1px;background:#383838;"></div><div class="a" style="left:1033px;top:290px;width:243.3px;height:1px;background:#383838;"></div><div class="a" style="left:1033px;top:324.8px;width:243.3px;height:1px;background:#383838;"></div><div class="a" style="left:1033px;top:172.2px;width:1px;height:153.1px;background:#4a4a4a;"></div><div class="a" style="left:1275.3px;top:172.2px;width:1px;height:153.1px;background:#4a4a4a;"></div><div class="c" style="left:1033.8px;top:151.78px;width:242.3px;font-size:12.3px;color:#fbf6ff;font-weight:bold;-webkit-text-stroke:0.25px #fbf6ff;">EBITDA Margin</div><div class="a" style="left:1052.75px;top:196px;width:20.5px;height:20.5px;border-radius:50%;background:#6aa84f"></div><div class="c" style="left:1092.5px;top:183.96px;width:184px;font-size:34px;color:#7131a1;font-weight:bold;">90.0</div><div class="r" style="left:1033.5px;top:234.23px;width:132.9px;font-size:10.8px;color:#111;font-weight:bold;">PY Value:</div><div class="r" style="left:1033.5px;top:251.53px;width:132.9px;font-size:10.8px;color:#111;font-weight:bold;">Change</div><div class="c" style="left:1168.8px;top:234.06px;width:57.3px;font-size:11px;color:#111;font-weight:bold;">70.2</div><div class="c" style="left:1168.8px;top:251.36px;width:57.3px;font-size:11px;color:#6aa84f;font-weight:bold;">+<svg class="one" width="6.118" height="7.568" viewBox="0 0 1139 1409"><path transform="matrix(1 0 0 -1 0 1409)" d="M478 0V1170L140 959V1180L493 1409H759V0Z" fill="currentColor" stroke="currentColor" stroke-width="40"/></svg>9.8</div><div class="c" style="left:1168.8px;top:273.56px;width:57.3px;font-size:11px;color:#6aa84f;font-weight:bold;">+28.2%</div><svg style="left:1152px;top:272.9px" width="12" height="11.5"><path d="M0 11.5H12L6 0Z" fill="#6aa84f"/></svg><div class="a" style="left:1039.1px;top:312.86px;width:14.2px;height:10.74px;background:#a974d8;"></div><div class="a" style="left:1058.86px;top:317.74px;width:14.2px;height:5.86px;background:#a974d8;"></div><div class="a" style="left:1078.62px;top:307.98px;width:14.2px;height:15.62px;background:#a974d8;"></div><div class="a" style="left:1098.68px;top:322.9px;width:13.6px;height:1px;background:#9c4545;"></div><div class="a" style="left:1118.14px;top:312.86px;width:14.2px;height:10.74px;background:#a974d8;"></div><div class="a" style="left:1137.9px;top:317.74px;width:14.2px;height:5.86px;background:#a974d8;"></div><div class="a" style="left:1157.66px;top:302.7px;width:14.2px;height:20.9px;background:#a974d8;"></div><div class="a" style="left:1177.42px;top:309.93px;width:14.2px;height:13.67px;background:#a974d8;"></div><div class="a" style="left:1197.18px;top:307.98px;width:14.2px;height:15.62px;background:#a974d8;"></div><div class="a" style="left:1216.94px;top:297.62px;width:14.2px;height:25.98px;background:#a974d8;"></div><div class="a" style="left:1236.7px;top:307.98px;width:14.2px;height:15.62px;background:#a974d8;"></div><div class="a" style="left:1256.46px;top:292.74px;width:14.2px;height:30.86px;background:#008000;"></div><div class="a" style="left:41.8px;top:367.9px;width:244px;height:181.7px;background:#ffffff;"></div><div class="a" style="left:41.8px;top:367.9px;width:244px;height:28.2px;background:#a974d8;"></div><div class="a" style="left:41.8px;top:367.9px;width:244px;height:1px;background:#86689a;"></div><div class="a" style="left:41.8px;top:367.9px;width:1px;height:27.2px;background:#86689a;"></div><div class="a" style="left:284.8px;top:367.9px;width:1px;height:27.2px;background:#86689a;"></div><div class="a" style="left:41.8px;top:395.1px;width:244px;height:1px;background:#383838;"></div><div class="a" style="left:41.8px;top:453.9px;width:244px;height:1px;background:#383838;"></div><div class="a" style="left:41.8px;top:514.1px;width:244px;height:1px;background:#383838;"></div><div class="a" style="left:41.8px;top:548.6px;width:244px;height:1px;background:#383838;"></div><div class="a" style="left:41.8px;top:395.6px;width:1px;height:153.5px;background:#4a4a4a;"></div><div class="a" style="left:284.8px;top:395.6px;width:1px;height:153.5px;background:#4a4a4a;"></div><div class="c" style="left:42.6px;top:375.88px;width:243px;font-size:12.3px;color:#fbf6ff;font-weight:bold;-webkit-text-stroke:0.25px #fbf6ff;">Revenue Growth Rate</div><div class="a" style="left:61.55px;top:419.75px;width:20.5px;height:20.5px;border-radius:50%;background:#f4b400"></div><div class="c" style="left:101.3px;top:407.96px;width:184px;font-size:34px;color:#7131a1;font-weight:bold;">3.6</div><div class="r" style="left:42.3px;top:458.33px;width:132.9px;font-size:10.8px;color:#111;font-weight:bold;">PY Value:</div><div class="r" style="left:42.3px;top:475.63px;width:132.9px;font-size:10.8px;color:#111;font-weight:bold;">Change</div><div class="c" style="left:177.6px;top:458.16px;width:57.3px;font-size:11px;color:#111;font-weight:bold;">3.4</div><div class="c" style="left:177.6px;top:475.46px;width:57.3px;font-size:11px;color:#6aa84f;font-weight:bold;">+0.2</div><div class="c" style="left:177.6px;top:496.56px;width:57.3px;font-size:11px;color:#6aa84f;font-weight:bold;">+5.9%</div><svg style="left:160.8px;top:496.8px" width="12" height="11.5"><path d="M0 11.5H12L6 0Z" fill="#6aa84f"/></svg><div class="a" style="left:47.9px;top:537.19px;width:14.2px;height:9.96px;background:#a974d8;"></div><div class="a" style="left:67.66px;top:521.76px;width:14.2px;height:25.39px;background:#a974d8;"></div><div class="a" style="left:87.72px;top:545.85px;width:13.6px;height:1.4px;background:#d02a35;"></div><div class="a" style="left:107.18px;top:534.45px;width:14.2px;height:12.7px;background:#a974d8;"></div><div class="a" style="left:126.94px;top:518.83px;width:14.2px;height:28.32px;background:#a974d8;"></div><div class="a" style="left:146.7px;top:528.6px;width:14.2px;height:18.55px;background:#a974d8;"></div><div class="a" style="left:166.46px;top:542.85px;width:14.2px;height:4.3px;background:#a974d8;"></div><div class="a" style="left:186.22px;top:525.67px;width:14.2px;height:21.48px;background:#a974d8;"></div><div class="a" style="left:205.98px;top:515.9px;width:14.2px;height:31.25px;background:#008000;"></div><div class="a" style="left:225.74px;top:537.19px;width:14.2px;height:9.96px;background:#a974d8;"></div><div class="a" style="left:245.5px;top:521.76px;width:14.2px;height:25.39px;background:#a974d8;"></div><div class="a" style="left:265.26px;top:531.52px;width:14.2px;height:15.62px;background:#a974d8;"></div><div class="a" style="left:289.9px;top:367.9px;width:243.4px;height:181.7px;background:#ffffff;"></div><div class="a" style="left:289.9px;top:367.9px;width:243.4px;height:28.2px;background:#a974d8;"></div><div class="a" style="left:289.9px;top:367.9px;width:243.4px;height:1px;background:#86689a;"></div><div class="a" style="left:289.9px;top:367.9px;width:1px;height:27.2px;background:#86689a;"></div><div class="a" style="left:532.3px;top:367.9px;width:1px;height:27.2px;background:#86689a;"></div><div class="a" style="left:289.9px;top:395.1px;width:243.4px;height:1px;background:#383838;"></div><div class="a" style="left:289.9px;top:453.9px;width:243.4px;height:1px;background:#383838;"></div><div class="a" style="left:289.9px;top:514.1px;width:243.4px;height:1px;background:#383838;"></div><div class="a" style="left:289.9px;top:548.6px;width:243.4px;height:1px;background:#383838;"></div><div class="a" style="left:289.9px;top:395.6px;width:1px;height:153.5px;background:#4a4a4a;"></div><div class="a" style="left:532.3px;top:395.6px;width:1px;height:153.5px;background:#4a4a4a;"></div><div class="c" style="left:290.7px;top:375.88px;width:242.4px;font-size:12.3px;color:#fbf6ff;font-weight:bold;-webkit-text-stroke:0.25px #fbf6ff;">Earnings Growth Rate</div><div class="a" style="left:309.65px;top:419.75px;width:20.5px;height:20.5px;border-radius:50%;background:#f4b400"></div><div class="c" style="left:349.4px;top:407.96px;width:184px;font-size:34px;color:#7131a1;font-weight:bold;">82.0</div><div class="r" style="left:290.4px;top:458.33px;width:132.9px;font-size:10.8px;color:#111;font-weight:bold;">PY Value:</div><div class="r" style="left:290.4px;top:475.63px;width:132.9px;font-size:10.8px;color:#111;font-weight:bold;">Change</div><div class="c" style="left:425.7px;top:458.16px;width:57.3px;font-size:11px;color:#111;font-weight:bold;">74.6</div><div class="c" style="left:425.7px;top:475.46px;width:57.3px;font-size:11px;color:#6aa84f;font-weight:bold;">+7.4</div><div class="c" style="left:425.7px;top:496.56px;width:57.3px;font-size:11px;color:#6aa84f;font-weight:bold;">+9.9%</div><svg style="left:408.9px;top:496.8px" width="12" height="11.5"><path d="M0 11.5H12L6 0Z" fill="#6aa84f"/></svg><div class="a" style="left:296.3px;top:545.85px;width:13.6px;height:1.4px;background:#d02a35;"></div><div class="a" style="left:315.76px;top:537.77px;width:14.2px;height:9.38px;background:#a974d8;"></div><div class="a" style="left:335.52px;top:542.27px;width:14.2px;height:4.88px;background:#a974d8;"></div><div class="a" style="left:355.28px;top:529.18px;width:14.2px;height:17.97px;background:#a974d8;"></div><div class="a" style="left:375.04px;top:533.48px;width:14.2px;height:13.67px;background:#a974d8;"></div><div class="a" style="left:394.8px;top:542.27px;width:14.2px;height:4.88px;background:#a974d8;"></div><div class="a" style="left:414.56px;top:537.77px;width:14.2px;height:9.38px;background:#a974d8;"></div><div class="a" style="left:434.32px;top:524.69px;width:14.2px;height:22.46px;background:#a974d8;"></div><div class="a" style="left:454.08px;top:529.18px;width:14.2px;height:17.97px;background:#a974d8;"></div><div class="a" style="left:473.84px;top:520.59px;width:14.2px;height:26.56px;background:#a974d8;"></div><div class="a" style="left:493.6px;top:524.69px;width:14.2px;height:22.46px;background:#a974d8;"></div><div class="a" style="left:513.36px;top:515.9px;width:14.2px;height:31.25px;background:#008000;"></div><div class="a" style="left:537.4px;top:367.9px;width:243.6px;height:181.7px;background:#ffffff;"></div><div class="a" style="left:537.4px;top:367.9px;width:243.6px;height:28.2px;background:#a974d8;"></div><div class="a" style="left:537.4px;top:367.9px;width:243.6px;height:1px;background:#86689a;"></div><div class="a" style="left:537.4px;top:367.9px;width:1px;height:27.2px;background:#86689a;"></div><div class="a" style="left:780px;top:367.9px;width:1px;height:27.2px;background:#86689a;"></div><div class="a" style="left:537.4px;top:395.1px;width:243.6px;height:1px;background:#383838;"></div><div class="a" style="left:537.4px;top:453.9px;width:243.6px;height:1px;background:#383838;"></div><div class="a" style="left:537.4px;top:514.1px;width:243.6px;height:1px;background:#383838;"></div><div class="a" style="left:537.4px;top:548.6px;width:243.6px;height:1px;background:#383838;"></div><div class="a" style="left:537.4px;top:395.6px;width:1px;height:153.5px;background:#4a4a4a;"></div><div class="a" style="left:780px;top:395.6px;width:1px;height:153.5px;background:#4a4a4a;"></div><div class="c" style="left:538.2px;top:375.88px;width:242.6px;font-size:12.3px;color:#fbf6ff;font-weight:bold;-webkit-text-stroke:0.25px #fbf6ff;">Cash Flow Coverage Ratio</div><div class="a" style="left:557.15px;top:419.75px;width:20.5px;height:20.5px;border-radius:50%;background:#cc0000"></div><div class="c" style="left:596.9px;top:407.96px;width:184px;font-size:34px;color:#7131a1;font-weight:bold;">5.2</div><div class="r" style="left:537.9px;top:458.33px;width:132.9px;font-size:10.8px;color:#111;font-weight:bold;">PY Value:</div><div class="r" style="left:537.9px;top:475.63px;width:132.9px;font-size:10.8px;color:#111;font-weight:bold;">Change</div><div class="c" style="left:673.2px;top:458.16px;width:57.3px;font-size:11px;color:#111;font-weight:bold;">5.3</div><div class="c" style="left:673.2px;top:475.46px;width:57.3px;font-size:11px;color:#c31f22;font-weight:bold;">-0.<svg class="one" width="6.118" height="7.568" viewBox="0 0 1139 1409"><path transform="matrix(1 0 0 -1 0 1409)" d="M478 0V1170L140 959V1180L493 1409H759V0Z" fill="currentColor" stroke="currentColor" stroke-width="40"/></svg></div><div class="c" style="left:673.2px;top:496.56px;width:57.3px;font-size:11px;color:#c31f22;font-weight:bold;">-<svg class="one" width="6.118" height="7.568" viewBox="0 0 1139 1409"><path transform="matrix(1 0 0 -1 0 1409)" d="M478 0V1170L140 959V1180L493 1409H759V0Z" fill="currentColor" stroke="currentColor" stroke-width="40"/></svg>.9%</div><svg style="left:656.4px;top:496.8px" width="12" height="11.5"><path d="M0 0H12L6 11.5Z" fill="#cc0000"/></svg><div class="a" style="left:543.8px;top:545.85px;width:13.6px;height:1.4px;background:#d02a35;"></div><div class="a" style="left:563.26px;top:537.77px;width:14.2px;height:9.38px;background:#a974d8;"></div><div class="a" style="left:583.02px;top:533.48px;width:14.2px;height:13.67px;background:#a974d8;"></div><div class="a" style="left:602.78px;top:542.27px;width:14.2px;height:4.88px;background:#a974d8;"></div><div class="a" style="left:622.54px;top:529.18px;width:14.2px;height:17.97px;background:#a974d8;"></div><div class="a" style="left:642.6px;top:545.85px;width:13.6px;height:1.4px;background:#d02a35;"></div><div class="a" style="left:662.06px;top:533.48px;width:14.2px;height:13.67px;background:#a974d8;"></div><div class="a" style="left:681.82px;top:524.69px;width:14.2px;height:22.46px;background:#a974d8;"></div><div class="a" style="left:701.58px;top:520.59px;width:14.2px;height:26.56px;background:#a974d8;"></div><div class="a" style="left:721.34px;top:537.77px;width:14.2px;height:9.38px;background:#a974d8;"></div><div class="a" style="left:741.1px;top:515.9px;width:14.2px;height:31.25px;background:#008000;"></div><div class="a" style="left:760.86px;top:533.48px;width:14.2px;height:13.67px;background:#a974d8;"></div><div class="a" style="left:785px;top:367.9px;width:244px;height:181.7px;background:#ffffff;"></div><div class="a" style="left:785px;top:367.9px;width:244px;height:28.2px;background:#a974d8;"></div><div class="a" style="left:785px;top:367.9px;width:244px;height:1px;background:#86689a;"></div><div class="a" style="left:785px;top:367.9px;width:1px;height:27.2px;background:#86689a;"></div><div class="a" style="left:1028px;top:367.9px;width:1px;height:27.2px;background:#86689a;"></div><div class="a" style="left:785px;top:395.1px;width:244px;height:1px;background:#383838;"></div><div class="a" style="left:785px;top:453.9px;width:244px;height:1px;background:#383838;"></div><div class="a" style="left:785px;top:514.1px;width:244px;height:1px;background:#383838;"></div><div class="a" style="left:785px;top:548.6px;width:244px;height:1px;background:#383838;"></div><div class="a" style="left:785px;top:395.6px;width:1px;height:153.5px;background:#4a4a4a;"></div><div class="a" style="left:1028px;top:395.6px;width:1px;height:153.5px;background:#4a4a4a;"></div><div class="c" style="left:785.8px;top:375.88px;width:243px;font-size:12.3px;color:#fbf6ff;font-weight:bold;-webkit-text-stroke:0.25px #fbf6ff;">Current Ratio</div><div class="a" style="left:804.75px;top:419.75px;width:20.5px;height:20.5px;border-radius:50%;background:#cc0000"></div><div class="c" style="left:844.5px;top:407.96px;width:184px;font-size:34px;color:#7131a1;font-weight:bold;">5.2</div><div class="r" style="left:785.5px;top:458.33px;width:132.9px;font-size:10.8px;color:#111;font-weight:bold;">PY Value:</div><div class="r" style="left:785.5px;top:475.63px;width:132.9px;font-size:10.8px;color:#111;font-weight:bold;">Change</div><div class="c" style="left:920.8px;top:458.16px;width:57.3px;font-size:11px;color:#111;font-weight:bold;">5.3</div><div class="c" style="left:920.8px;top:475.46px;width:57.3px;font-size:11px;color:#c31f22;font-weight:bold;">-0.<svg class="one" width="6.118" height="7.568" viewBox="0 0 1139 1409"><path transform="matrix(1 0 0 -1 0 1409)" d="M478 0V1170L140 959V1180L493 1409H759V0Z" fill="currentColor" stroke="currentColor" stroke-width="40"/></svg></div><div class="c" style="left:920.8px;top:496.56px;width:57.3px;font-size:11px;color:#c31f22;font-weight:bold;">-<svg class="one" width="6.118" height="7.568" viewBox="0 0 1139 1409"><path transform="matrix(1 0 0 -1 0 1409)" d="M478 0V1170L140 959V1180L493 1409H759V0Z" fill="currentColor" stroke="currentColor" stroke-width="40"/></svg>.9%</div><svg style="left:904px;top:496.8px" width="12" height="11.5"><path d="M0 0H12L6 11.5Z" fill="#cc0000"/></svg><div class="a" style="left:791.4px;top:545.85px;width:13.6px;height:1.4px;background:#d02a35;"></div><div class="a" style="left:810.86px;top:537.77px;width:14.2px;height:9.38px;background:#a974d8;"></div><div class="a" style="left:830.62px;top:533.48px;width:14.2px;height:13.67px;background:#a974d8;"></div><div class="a" style="left:850.38px;top:542.27px;width:14.2px;height:4.88px;background:#a974d8;"></div><div class="a" style="left:870.14px;top:529.18px;width:14.2px;height:17.97px;background:#a974d8;"></div><div class="a" style="left:890.2px;top:545.85px;width:13.6px;height:1.4px;background:#d02a35;"></div><div class="a" style="left:909.66px;top:533.48px;width:14.2px;height:13.67px;background:#a974d8;"></div><div class="a" style="left:929.42px;top:524.69px;width:14.2px;height:22.46px;background:#a974d8;"></div><div class="a" style="left:949.18px;top:520.59px;width:14.2px;height:26.56px;background:#a974d8;"></div><div class="a" style="left:968.94px;top:537.77px;width:14.2px;height:9.38px;background:#a974d8;"></div><div class="a" style="left:988.7px;top:515.9px;width:14.2px;height:31.25px;background:#008000;"></div><div class="a" style="left:1008.46px;top:533.48px;width:14.2px;height:13.67px;background:#a974d8;"></div><div class="a" style="left:1033px;top:367.9px;width:243.3px;height:181.7px;background:#ffffff;"></div><div class="a" style="left:1033px;top:367.9px;width:243.3px;height:28.2px;background:#a974d8;"></div><div class="a" style="left:1033px;top:367.9px;width:243.3px;height:1px;background:#86689a;"></div><div class="a" style="left:1033px;top:367.9px;width:1px;height:27.2px;background:#86689a;"></div><div class="a" style="left:1275.3px;top:367.9px;width:1px;height:27.2px;background:#86689a;"></div><div class="a" style="left:1033px;top:395.1px;width:243.3px;height:1px;background:#383838;"></div><div class="a" style="left:1033px;top:453.9px;width:243.3px;height:1px;background:#383838;"></div><div class="a" style="left:1033px;top:514.1px;width:243.3px;height:1px;background:#383838;"></div><div class="a" style="left:1033px;top:548.6px;width:243.3px;height:1px;background:#383838;"></div><div class="a" style="left:1033px;top:395.6px;width:1px;height:153.5px;background:#4a4a4a;"></div><div class="a" style="left:1275.3px;top:395.6px;width:1px;height:153.5px;background:#4a4a4a;"></div><div class="c" style="left:1033.8px;top:375.88px;width:242.3px;font-size:12.3px;color:#fbf6ff;font-weight:bold;-webkit-text-stroke:0.25px #fbf6ff;">Expense Ratio</div><div class="a" style="left:1052.75px;top:419.75px;width:20.5px;height:20.5px;border-radius:50%;background:#6aa84f"></div><div class="c" style="left:1092.5px;top:407.96px;width:184px;font-size:34px;color:#7131a1;font-weight:bold;">5.2</div><div class="r" style="left:1033.5px;top:458.33px;width:132.9px;font-size:10.8px;color:#111;font-weight:bold;">PY Value:</div><div class="r" style="left:1033.5px;top:475.63px;width:132.9px;font-size:10.8px;color:#111;font-weight:bold;">Change</div><div class="c" style="left:1168.8px;top:458.16px;width:57.3px;font-size:11px;color:#111;font-weight:bold;">5.3</div><div class="c" style="left:1168.8px;top:475.46px;width:57.3px;font-size:11px;color:#6aa84f;font-weight:bold;">-0.<svg class="one" width="6.118" height="7.568" viewBox="0 0 1139 1409"><path transform="matrix(1 0 0 -1 0 1409)" d="M478 0V1170L140 959V1180L493 1409H759V0Z" fill="currentColor" stroke="currentColor" stroke-width="40"/></svg></div><div class="c" style="left:1168.8px;top:496.56px;width:57.3px;font-size:11px;color:#6aa84f;font-weight:bold;">-<svg class="one" width="6.118" height="7.568" viewBox="0 0 1139 1409"><path transform="matrix(1 0 0 -1 0 1409)" d="M478 0V1170L140 959V1180L493 1409H759V0Z" fill="currentColor" stroke="currentColor" stroke-width="40"/></svg>.9%</div><svg style="left:1152px;top:496.8px" width="12" height="11.5"><path d="M0 0H12L6 11.5Z" fill="#6aa84f"/></svg><div class="a" style="left:1039.4px;top:545.85px;width:13.6px;height:1.4px;background:#d02a35;"></div><div class="a" style="left:1058.86px;top:537.77px;width:14.2px;height:9.38px;background:#a974d8;"></div><div class="a" style="left:1078.62px;top:533.48px;width:14.2px;height:13.67px;background:#a974d8;"></div><div class="a" style="left:1098.38px;top:542.27px;width:14.2px;height:4.88px;background:#a974d8;"></div><div class="a" style="left:1118.14px;top:529.18px;width:14.2px;height:17.97px;background:#a974d8;"></div><div class="a" style="left:1138.2px;top:545.85px;width:13.6px;height:1.4px;background:#d02a35;"></div><div class="a" style="left:1157.66px;top:533.48px;width:14.2px;height:13.67px;background:#a974d8;"></div><div class="a" style="left:1177.42px;top:524.69px;width:14.2px;height:22.46px;background:#a974d8;"></div><div class="a" style="left:1197.18px;top:520.59px;width:14.2px;height:26.56px;background:#a974d8;"></div><div class="a" style="left:1216.94px;top:537.77px;width:14.2px;height:9.38px;background:#a974d8;"></div><div class="a" style="left:1236.7px;top:515.9px;width:14.2px;height:31.25px;background:#008000;"></div><div class="a" style="left:1256.46px;top:533.48px;width:14.2px;height:13.67px;background:#a974d8;"></div></body></html>
